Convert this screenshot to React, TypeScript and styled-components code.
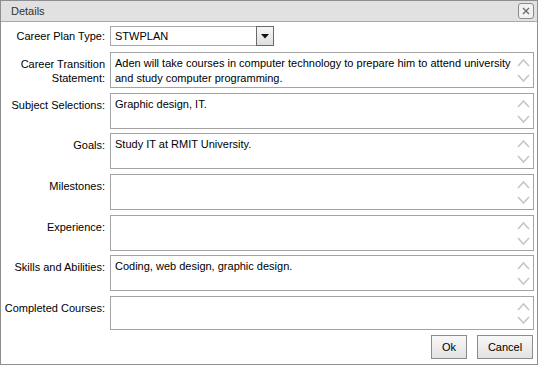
import React from "react";
import styled, { createGlobalStyle } from "styled-components";

const Global = createGlobalStyle`
  html, body { margin: 0; padding: 0; background: #fff; }
  body { font-family: "Liberation Sans", Arial, sans-serif; font-size: 11px; color: #000; }
`;

const Window = styled.div`
  box-sizing: border-box;
  width: 538px;
  height: 365px;
  border: 1px solid #8e8e8e;
  background: #fff;
  display: flex;
  flex-direction: column;
`;

const TitleBar = styled.div`
  box-sizing: border-box;
  height: 21px;
  background: #e1e1e1;
  border-bottom: 1px solid #a8a8a8;
  display: flex;
  align-items: center;
  justify-content: space-between;
  padding: 0 3px 0 10px;
`;

const Title = styled.span`
  color: #333;
  font-size: 11px;
`;

const CloseButton = styled.div`
  box-sizing: border-box;
  width: 16px;
  height: 16px;
  border: 1px solid #8a8a8a;
  border-radius: 3px;
  background: #f2f2f2;
  display: flex;
  align-items: center;
  justify-content: center;
`;

const Form = styled.div`
  display: grid;
  grid-template-columns: 104px 424px;
  column-gap: 5px;
  padding: 4px 0 0 0;
  row-gap: 4.7px;
`;

const Label = styled.div<{ $center?: boolean }>`
  text-align: right;
  white-space: nowrap;
  line-height: 14px;
  padding-top: ${(p) => (p.$center ? "3px" : "5px")};
  color: #000;
`;

const SelectRow = styled.div`
  margin-bottom: 1.3px;
`;

const SelectBox = styled.div`
  box-sizing: border-box;
  width: 164px;
  height: 20px;
  border: 1px solid #a9a9a9;
  display: flex;
  align-items: stretch;
`;

const SelectText = styled.div`
  flex: 1;
  padding-left: 4px;
  line-height: 18px;
`;

const DropButton = styled.div`
  box-sizing: border-box;
  width: 18px;
  margin: -1px -1px -1px 0;
  border: 1px solid #6a6a6a;
  background: linear-gradient(#f7f7f7, #dedede);
  display: flex;
  align-items: center;
  justify-content: center;
`;

const Field = styled.div<{ $h: number }>`
  box-sizing: border-box;
  height: ${(p) => p.$h}px;
  border: 1px solid #a3a3a3;
  display: flex;
`;

const FieldText = styled.div`
  flex: 1;
  padding: 3px 4px;
  line-height: 15px;
  white-space: nowrap;
`;

const ScrollCol = styled.div`
  width: 16px;
  margin-right: 2px;
  display: flex;
  flex-direction: column;
  justify-content: space-between;
  align-items: center;
  padding: 5px 0 4px;
`;

const Footer = styled.div`
  display: flex;
  justify-content: flex-end;
  gap: 10px;
  padding: 5px 4px 0 0;
`;

const Button = styled.div<{ $w: number }>`
  box-sizing: border-box;
  width: ${(p) => p.$w}px;
  height: 24px;
  border: 1px solid #8c8c8c;
  background: linear-gradient(#f8f8f8, #e2e2e2);
  display: flex;
  align-items: center;
  justify-content: center;
  font-size: 11px;
`;

const Chevron = ({ up }: { up?: boolean }) => (
  <svg width="13" height="9" viewBox="0 0 13 9">
    <polyline
      points={up ? "1,8 6.5,2 12,8" : "1,1 6.5,7 12,1"}
      fill="none"
      stroke="#c6c6c6"
      strokeWidth="1.6"
    />
  </svg>
);

const rows: { label: React.ReactNode; text: React.ReactNode; h?: number }[] = [
  {
    label: (
      <>
        Career Transition
        <br />
        Statement:
      </>
    ),
    text: (
      <>
        Aden will take courses in computer technology to prepare him to attend university
        <br />
        and study computer programming.
      </>
    ),
  },
  { label: "Subject Selections:", text: "Graphic design, IT." },
  { label: "Goals:", text: "Study IT at RMIT University." },
  { label: "Milestones:", text: "" },
  { label: "Experience:", text: "" },
  { label: "Skills and Abilities:", text: "Coding, web design, graphic design." },
  { label: "Completed Courses:", text: "", h: 34 },
];

export default function App() {
  return (
    <>
      <Global />
      <Window>
        <TitleBar>
          <Title>Details</Title>
          <CloseButton>
            <svg width="8" height="8" viewBox="0 0 8 8">
              <path d="M1 1 L7 7 M7 1 L1 7" stroke="#6e6e6e" strokeWidth="1.4" />
            </svg>
          </CloseButton>
        </TitleBar>
        <Form>
          <Label $center>Career Plan Type:</Label>
          <SelectRow>
            <SelectBox>
              <SelectText>STWPLAN</SelectText>
              <DropButton>
                <svg width="8" height="5" viewBox="0 0 8 5">
                  <polygon points="0,0 8,0 4,4.5" fill="#111" />
                </svg>
              </DropButton>
            </SelectBox>
          </SelectRow>
          {rows.map((r, i) => (
            <React.Fragment key={i}>
              <Label>{r.label}</Label>
              <Field $h={r.h ?? 36}>
                <FieldText>{r.text}</FieldText>
                <ScrollCol>
                  <Chevron up />
                  <Chevron />
                </ScrollCol>
              </Field>
            </React.Fragment>
          ))}
        </Form>
        <Footer>
          <Button $w={36}>Ok</Button>
          <Button $w={56}>Cancel</Button>
        </Footer>
      </Window>
    </>
  );
}
